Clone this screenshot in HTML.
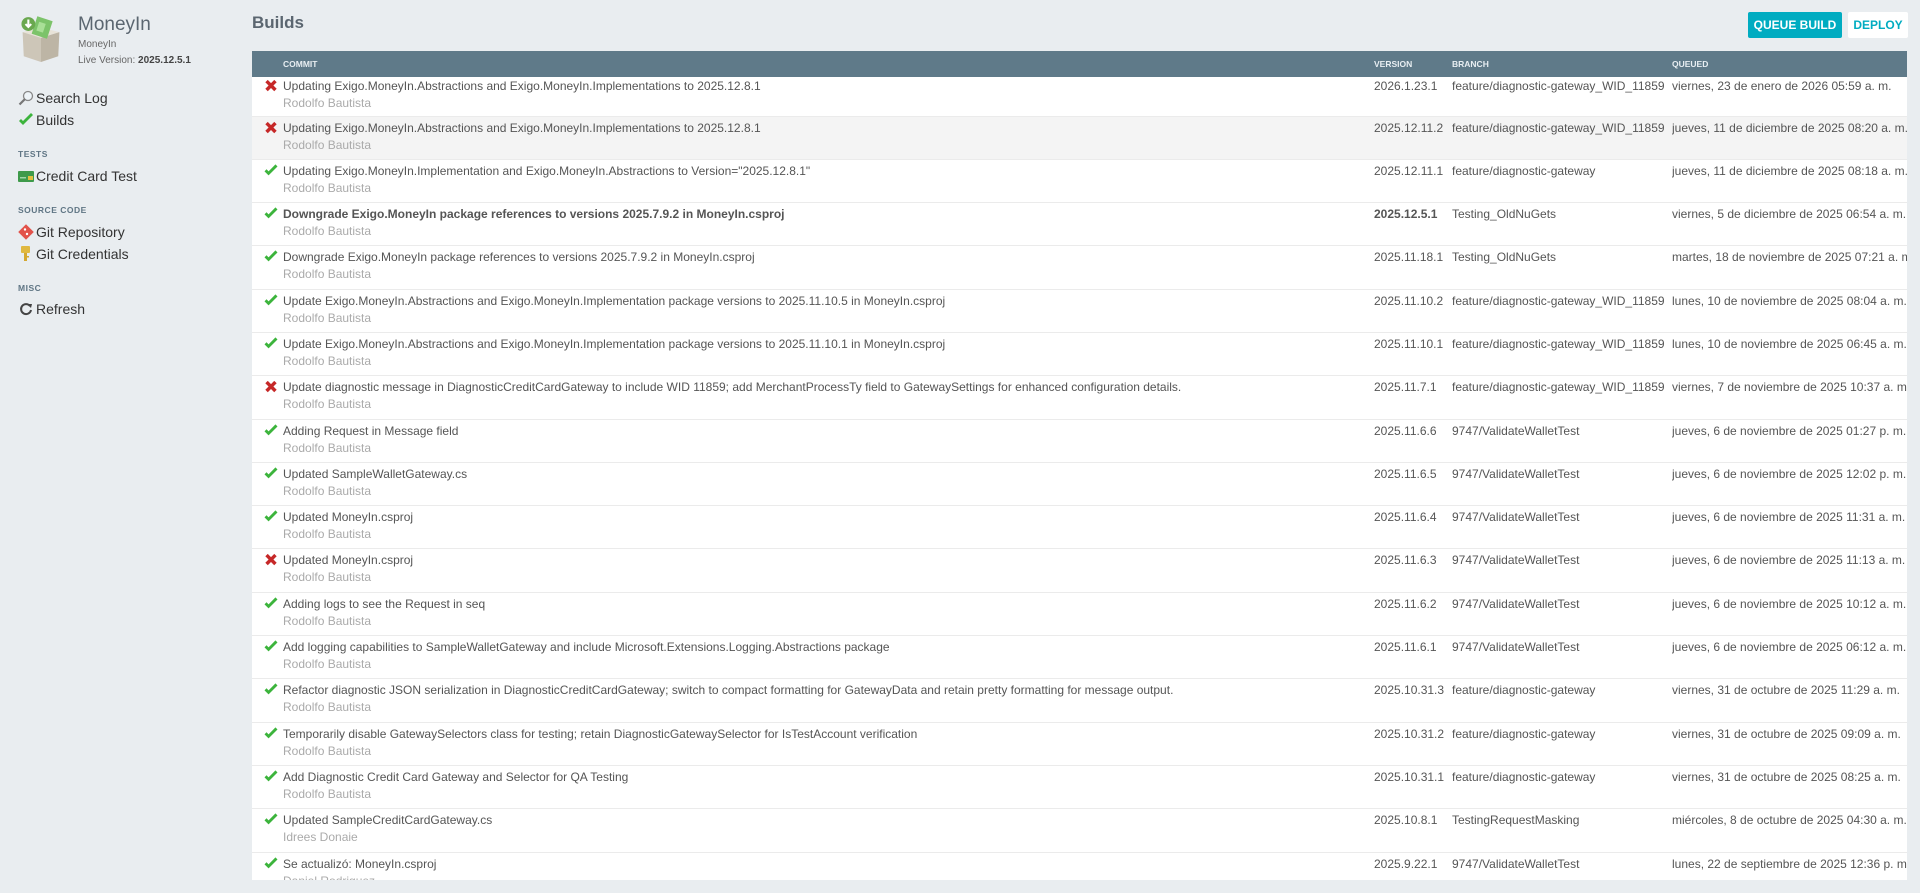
<!DOCTYPE html>
<html><head><meta charset="utf-8"><style>
*{margin:0;padding:0;box-sizing:border-box}
body{width:1920px;height:893px;overflow:hidden;background:#e9edf0;font-family:"Liberation Sans",sans-serif;color:#555;position:relative}
.side{position:absolute;left:0;top:0;width:200px}
.logo{position:absolute;left:18px;top:16px;width:46px;height:46px}
.t1{position:absolute;left:78px;top:14px;font-size:19px;color:#5b6670}
.t2{position:absolute;left:78px;top:39px;font-size:10px;color:#666}
.t3{position:absolute;left:78px;top:55px;font-size:10px;color:#666}
.t3 b{color:#444}
.nav{position:absolute;left:18px;font-size:14px;color:#333;display:flex;align-items:center;gap:2px}
.ic{width:16px;height:16px;display:inline-block}
.hd{position:absolute;left:18px;font-size:8.5px;font-weight:bold;color:#5f7584;letter-spacing:.5px}
h1{position:absolute;left:252px;top:13px;font-size:17px;font-weight:bold;color:#5b6670}
.btn{position:absolute;top:12px;height:26px;font-size:12px;font-weight:bold;line-height:26px;text-align:center;border-radius:2px}
.tbl{position:absolute;left:252px;top:51px;width:1655px;height:26px;overflow:hidden;background:#5f7a89}
table{border-collapse:collapse;width:1655px;table-layout:fixed}
th{background:#5f7a89;color:#e8eef2;font-size:8.5px;text-align:left;height:26px;font-weight:bold;padding:0}
td{font-size:12px;line-height:15px;color:#555;vertical-align:top;padding:0;padding-top:4px;height:43.3px;border-top:1px solid #ebebeb;white-space:nowrap;overflow:hidden}
tr:first-child td{border-top:none;height:39px;padding-top:2px}
.au{color:#aaa;font-size:12px;margin-top:2px;margin-left:31px}
.st{display:inline-block;width:14px;height:13px;vertical-align:-2px;margin-left:12px;margin-right:5px}
tr.h td{background:#f4f4f4}
tr.b td.m,tr.b td.v{font-weight:bold}
.tbl2{position:absolute;left:252px;top:77px;width:1655px;height:803px;overflow:hidden;background:#fff}
</style></head><body>
<div class="side">
<svg class="logo" viewBox="0 0 40 40"><polygon points="4,14 20,10 36,14 20,19" fill="#e8e3d8"/><polygon points="4,14 20,19 20,40 5,35" fill="#cdc6b8"/><polygon points="20,19 36,14 35,35 20,40" fill="#bdb5a5"/><rect x="14" y="2" width="14" height="16" fill="#7cc36a" transform="rotate(18 21 10)"/><rect x="17" y="6" width="6" height="8" fill="#a9df97" transform="rotate(18 21 10)"/><circle cx="9" cy="7" r="6" fill="#6aa84f"/><path d="M9 3v6M6.5 7L9 9.5 11.5 7" stroke="#fff" stroke-width="1.8" fill="none"/></svg>
<div class="t1">MoneyIn</div>
<div class="t2">MoneyIn</div>
<div class="t3">Live Version: <b>2025.12.5.1</b></div>
<div class="nav" style="top:90px"><svg class="ic" viewBox="0 0 16 16"><circle cx="10" cy="6" r="4.5" fill="#eef4f8" stroke="#888" stroke-width="1.3"/><path d="M7 9L1.5 14.5" stroke="#777" stroke-width="2.2"/></svg>Search Log</div>
<div class="nav" style="top:112px"><svg class="ic" viewBox="0 0 16 16"><path d="M1 9l4 4 10-10-2-2-8 8-2-2z" fill="#3cb43c"/></svg>Builds</div>
<div class="hd" style="top:149px">TESTS</div>
<div class="nav" style="top:168px"><svg class="ic" viewBox="0 0 16 16"><rect x="0" y="3" width="16" height="11" rx="1" fill="#3e9a4a"/><rect x="10" y="8" width="5" height="4" fill="#e0c040"/><rect x="2" y="9" width="6" height="1.5" fill="#9fd6a6"/></svg>Credit Card Test</div>
<div class="hd" style="top:205px">SOURCE CODE</div>
<div class="nav" style="top:224px"><svg class="ic" viewBox="0 0 16 16"><rect x="2.5" y="2.5" width="11" height="11" transform="rotate(45 8 8)" fill="#e2524a"/><circle cx="7" cy="5.5" r="1.2" fill="#fff"/><circle cx="9" cy="10" r="1.2" fill="#fff"/></svg>Git Repository</div>
<div class="nav" style="top:246px"><svg class="ic" viewBox="0 0 16 16"><rect x="3" y="0" width="9" height="7" rx="1" fill="#e0b840"/><rect x="6" y="7" width="3" height="8" fill="#d4a830"/><rect x="9" y="10" width="2" height="1.5" fill="#d4a830"/></svg>Git Credentials</div>
<div class="hd" style="top:283px">MISC</div>
<div class="nav" style="top:301px"><svg class="ic" viewBox="0 0 16 16"><path d="M12 5A5 5 0 1 0 13 9" stroke="#444" stroke-width="2" fill="none"/><path d="M9 3h5l-1 4z" fill="#444"/></svg>Refresh</div>
</div>
<h1>Builds</h1>
<div class="btn" style="left:1748px;width:94px;background:#00acc1;color:#fff">QUEUE BUILD</div>
<div class="btn" style="left:1848px;width:60px;background:#fff;color:#00acc1">DEPLOY</div>
<div class="tbl"><table>
<colgroup><col style="width:1122px"><col style="width:78px"><col style="width:220px"><col style="width:235px"></colgroup>
<tr><th style="padding-left:31px">COMMIT</th><th>VERSION</th><th>BRANCH</th><th>QUEUED</th></tr>
</table></div>
<div class="tbl2"><table>
<colgroup><col style="width:1122px"><col style="width:78px"><col style="width:220px"><col style="width:235px"></colgroup>
<tr><td class="m"><svg class="st" viewBox="0 0 16 16"><path d="M1 4l3-3 4 4 4-4 3 3-4 4 4 4-3 3-4-4-4 4-3-3 4-4z" fill="#c62828"/></svg>Updating Exigo.MoneyIn.Abstractions and Exigo.MoneyIn.Implementations to 2025.12.8.1<div class="au">Rodolfo Bautista</div></td><td class="v">2026.1.23.1</td><td>feature/diagnostic-gateway_WID_11859</td><td>viernes, 23 de enero de 2026 05:59 a. m.</td></tr>
<tr class="h"><td class="m"><svg class="st" viewBox="0 0 16 16"><path d="M1 4l3-3 4 4 4-4 3 3-4 4 4 4-3 3-4-4-4 4-3-3 4-4z" fill="#c62828"/></svg>Updating Exigo.MoneyIn.Abstractions and Exigo.MoneyIn.Implementations to 2025.12.8.1<div class="au">Rodolfo Bautista</div></td><td class="v">2025.12.11.2</td><td>feature/diagnostic-gateway_WID_11859</td><td>jueves, 11 de diciembre de 2025 08:20 a. m.</td></tr>
<tr><td class="m"><svg class="st" viewBox="0 0 16 16"><path d="M0 9l5 5 11-11-2.5-2.5-8.5 8.5-2.5-2.5z" fill="#3cb43c"/></svg>Updating Exigo.MoneyIn.Implementation and Exigo.MoneyIn.Abstractions to Version="2025.12.8.1"<div class="au">Rodolfo Bautista</div></td><td class="v">2025.12.11.1</td><td>feature/diagnostic-gateway</td><td>jueves, 11 de diciembre de 2025 08:18 a. m.</td></tr>
<tr class="b"><td class="m"><svg class="st" viewBox="0 0 16 16"><path d="M0 9l5 5 11-11-2.5-2.5-8.5 8.5-2.5-2.5z" fill="#3cb43c"/></svg>Downgrade Exigo.MoneyIn package references to versions 2025.7.9.2 in MoneyIn.csproj<div class="au" style="font-weight:normal">Rodolfo Bautista</div></td><td class="v">2025.12.5.1</td><td>Testing_OldNuGets</td><td>viernes, 5 de diciembre de 2025 06:54 a. m.</td></tr>
<tr><td class="m"><svg class="st" viewBox="0 0 16 16"><path d="M0 9l5 5 11-11-2.5-2.5-8.5 8.5-2.5-2.5z" fill="#3cb43c"/></svg>Downgrade Exigo.MoneyIn package references to versions 2025.7.9.2 in MoneyIn.csproj<div class="au">Rodolfo Bautista</div></td><td class="v">2025.11.18.1</td><td>Testing_OldNuGets</td><td>martes, 18 de noviembre de 2025 07:21 a. m.</td></tr>
<tr><td class="m"><svg class="st" viewBox="0 0 16 16"><path d="M0 9l5 5 11-11-2.5-2.5-8.5 8.5-2.5-2.5z" fill="#3cb43c"/></svg>Update Exigo.MoneyIn.Abstractions and Exigo.MoneyIn.Implementation package versions to 2025.11.10.5 in MoneyIn.csproj<div class="au">Rodolfo Bautista</div></td><td class="v">2025.11.10.2</td><td>feature/diagnostic-gateway_WID_11859</td><td>lunes, 10 de noviembre de 2025 08:04 a. m.</td></tr>
<tr><td class="m"><svg class="st" viewBox="0 0 16 16"><path d="M0 9l5 5 11-11-2.5-2.5-8.5 8.5-2.5-2.5z" fill="#3cb43c"/></svg>Update Exigo.MoneyIn.Abstractions and Exigo.MoneyIn.Implementation package versions to 2025.11.10.1 in MoneyIn.csproj<div class="au">Rodolfo Bautista</div></td><td class="v">2025.11.10.1</td><td>feature/diagnostic-gateway_WID_11859</td><td>lunes, 10 de noviembre de 2025 06:45 a. m.</td></tr>
<tr><td class="m"><svg class="st" viewBox="0 0 16 16"><path d="M1 4l3-3 4 4 4-4 3 3-4 4 4 4-3 3-4-4-4 4-3-3 4-4z" fill="#c62828"/></svg>Update diagnostic message in DiagnosticCreditCardGateway to include WID 11859; add MerchantProcessTy field to GatewaySettings for enhanced configuration details.<div class="au">Rodolfo Bautista</div></td><td class="v">2025.11.7.1</td><td>feature/diagnostic-gateway_WID_11859</td><td>viernes, 7 de noviembre de 2025 10:37 a. m.</td></tr>
<tr><td class="m"><svg class="st" viewBox="0 0 16 16"><path d="M0 9l5 5 11-11-2.5-2.5-8.5 8.5-2.5-2.5z" fill="#3cb43c"/></svg>Adding Request in Message field<div class="au">Rodolfo Bautista</div></td><td class="v">2025.11.6.6</td><td>9747/ValidateWalletTest</td><td>jueves, 6 de noviembre de 2025 01:27 p. m.</td></tr>
<tr><td class="m"><svg class="st" viewBox="0 0 16 16"><path d="M0 9l5 5 11-11-2.5-2.5-8.5 8.5-2.5-2.5z" fill="#3cb43c"/></svg>Updated SampleWalletGateway.cs<div class="au">Rodolfo Bautista</div></td><td class="v">2025.11.6.5</td><td>9747/ValidateWalletTest</td><td>jueves, 6 de noviembre de 2025 12:02 p. m.</td></tr>
<tr><td class="m"><svg class="st" viewBox="0 0 16 16"><path d="M0 9l5 5 11-11-2.5-2.5-8.5 8.5-2.5-2.5z" fill="#3cb43c"/></svg>Updated MoneyIn.csproj<div class="au">Rodolfo Bautista</div></td><td class="v">2025.11.6.4</td><td>9747/ValidateWalletTest</td><td>jueves, 6 de noviembre de 2025 11:31 a. m.</td></tr>
<tr><td class="m"><svg class="st" viewBox="0 0 16 16"><path d="M1 4l3-3 4 4 4-4 3 3-4 4 4 4-3 3-4-4-4 4-3-3 4-4z" fill="#c62828"/></svg>Updated MoneyIn.csproj<div class="au">Rodolfo Bautista</div></td><td class="v">2025.11.6.3</td><td>9747/ValidateWalletTest</td><td>jueves, 6 de noviembre de 2025 11:13 a. m.</td></tr>
<tr><td class="m"><svg class="st" viewBox="0 0 16 16"><path d="M0 9l5 5 11-11-2.5-2.5-8.5 8.5-2.5-2.5z" fill="#3cb43c"/></svg>Adding logs to see the Request in seq<div class="au">Rodolfo Bautista</div></td><td class="v">2025.11.6.2</td><td>9747/ValidateWalletTest</td><td>jueves, 6 de noviembre de 2025 10:12 a. m.</td></tr>
<tr><td class="m"><svg class="st" viewBox="0 0 16 16"><path d="M0 9l5 5 11-11-2.5-2.5-8.5 8.5-2.5-2.5z" fill="#3cb43c"/></svg>Add logging capabilities to SampleWalletGateway and include Microsoft.Extensions.Logging.Abstractions package<div class="au">Rodolfo Bautista</div></td><td class="v">2025.11.6.1</td><td>9747/ValidateWalletTest</td><td>jueves, 6 de noviembre de 2025 06:12 a. m.</td></tr>
<tr><td class="m"><svg class="st" viewBox="0 0 16 16"><path d="M0 9l5 5 11-11-2.5-2.5-8.5 8.5-2.5-2.5z" fill="#3cb43c"/></svg>Refactor diagnostic JSON serialization in DiagnosticCreditCardGateway; switch to compact formatting for GatewayData and retain pretty formatting for message output.<div class="au">Rodolfo Bautista</div></td><td class="v">2025.10.31.3</td><td>feature/diagnostic-gateway</td><td>viernes, 31 de octubre de 2025 11:29 a. m.</td></tr>
<tr><td class="m"><svg class="st" viewBox="0 0 16 16"><path d="M0 9l5 5 11-11-2.5-2.5-8.5 8.5-2.5-2.5z" fill="#3cb43c"/></svg>Temporarily disable GatewaySelectors class for testing; retain DiagnosticGatewaySelector for IsTestAccount verification<div class="au">Rodolfo Bautista</div></td><td class="v">2025.10.31.2</td><td>feature/diagnostic-gateway</td><td>viernes, 31 de octubre de 2025 09:09 a. m.</td></tr>
<tr><td class="m"><svg class="st" viewBox="0 0 16 16"><path d="M0 9l5 5 11-11-2.5-2.5-8.5 8.5-2.5-2.5z" fill="#3cb43c"/></svg>Add Diagnostic Credit Card Gateway and Selector for QA Testing<div class="au">Rodolfo Bautista</div></td><td class="v">2025.10.31.1</td><td>feature/diagnostic-gateway</td><td>viernes, 31 de octubre de 2025 08:25 a. m.</td></tr>
<tr><td class="m"><svg class="st" viewBox="0 0 16 16"><path d="M0 9l5 5 11-11-2.5-2.5-8.5 8.5-2.5-2.5z" fill="#3cb43c"/></svg>Updated SampleCreditCardGateway.cs<div class="au">Idrees Donaie</div></td><td class="v">2025.10.8.1</td><td>TestingRequestMasking</td><td>miércoles, 8 de octubre de 2025 04:30 a. m.</td></tr>
<tr><td class="m"><svg class="st" viewBox="0 0 16 16"><path d="M0 9l5 5 11-11-2.5-2.5-8.5 8.5-2.5-2.5z" fill="#3cb43c"/></svg>Se actualizó: MoneyIn.csproj<div class="au">Daniel Rodriguez</div></td><td class="v">2025.9.22.1</td><td>9747/ValidateWalletTest</td><td>lunes, 22 de septiembre de 2025 12:36 p. m.</td></tr>
</table></div>
</body></html>
